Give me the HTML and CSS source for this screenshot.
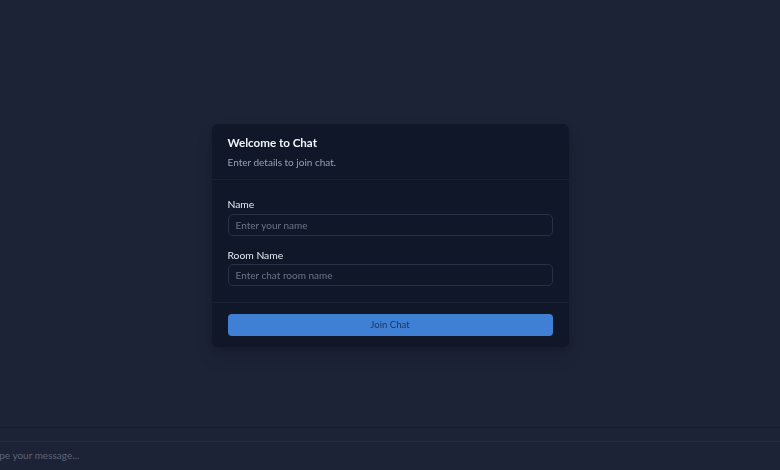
FILE: index.html
```html
<!DOCTYPE html>
<html lang="en">
<head>
<meta charset="utf-8">
<title>Chat</title>
<link rel="stylesheet" href="styles.css">
</head>
<body>
<div class="app">
  <div class="messages"></div>
  <div class="composer">
    <div class="composer-input"><span class="placeholder">Type your message...</span></div>
  </div>
</div>
<div class="overlay">
  <div class="card">
    <div class="card-header">
      <div class="card-title">Welcome to Chat</div>
      <div class="card-desc">Enter details to join chat.</div>
    </div>
    <div class="card-body">
      <label class="label">Name</label>
      <div class="input"><span class="ph">Enter your name</span></div>
      <label class="label second">Room Name</label>
      <div class="input"><span class="ph">Enter chat room name</span></div>
    </div>
    <div class="card-footer">
      <div class="button">Join Chat</div>
    </div>
  </div>
</div>
</body>
</html>
```
FILE: styles.css
```css
* { box-sizing: border-box; }
html, body { margin: 0; padding: 0; height: 100%; }
body {
  background: #1c2336;
  font-family: "Lato", "Noto Sans", sans-serif;
  color: #e5e7eb;
  overflow: hidden;
}
.app {
  height: 470px;
  display: flex;
  flex-direction: column;
}
.messages { flex: 1; }
.composer {
  border-top: 1px solid #161c2d;
  padding-top: 13px;
}
.composer-input {
  border-top: 1px solid #222a3d;
  height: 29px;
  display: flex;
  align-items: center;
  font-size: 10px;
  color: #5b6478;
  padding-bottom: 3px;
}
.placeholder { margin-left: -11px; }

.overlay {
  position: fixed;
  inset: 0;
  display: flex;
  align-items: center;
  justify-content: center;
}
.card {
  width: 357px;
  background: #0f1729;
  border-radius: 6px;
  box-shadow: 0 10px 18px rgba(0,0,0,0.12), 0 2px 6px rgba(0,0,0,0.15);
}
.card-header {
  padding: 10px 16px 10px;
  border-bottom: 1px solid #182033;
}
.card-title {
  font-size: 11.6px;
  line-height: 18px;
  font-weight: 700;
  color: #f1f5f9;
}
.card-desc {
  font-size: 10px;
  line-height: 14px;
  margin-top: 3px;
  color: #94a0b4;
}
.card-body {
  padding: 16px 16px 16px;
  border-bottom: 1px solid #182033;
  display: flex;
  flex-direction: column;
}
.label {
  font-size: 10.3px;
  line-height: 16px;
  color: #e2e8f0;
  margin-bottom: 2px;
}
.label.second { margin-top: 11px; margin-bottom: 1px; }
.input {
  height: 22px;
  border: 1px solid #283247;
  border-radius: 5px;
  padding: 0 7px;
  display: flex;
  align-items: center;
  font-size: 10px;
  color: #6b7487;
}
.card-footer {
  padding: 11px 16px;
}
.button {
  height: 22px;
  background: #4080d4;
  border-radius: 4px;
  display: flex;
  align-items: center;
  justify-content: center;
  font-size: 9.6px;
  color: #1b3567;
}
```
